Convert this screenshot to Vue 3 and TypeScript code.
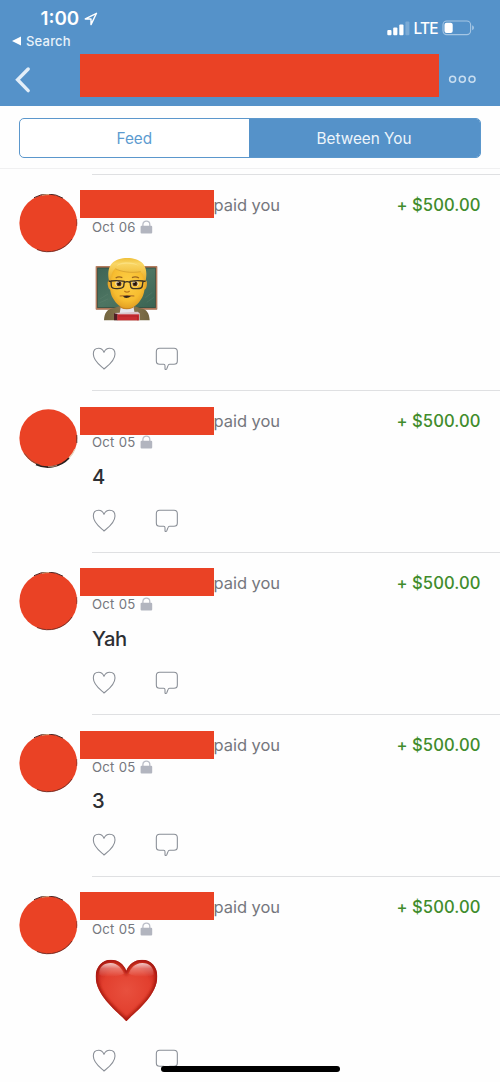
<script setup lang="ts">
interface Payment {
  id: number
  date: string
  note?: string
  emoji?: 'teacher' | 'heart'
  low?: boolean
  shade: 'light' | 'deep'
}

const payments: Payment[] = [
  { id: 1, date: 'Oct 06', emoji: 'teacher', shade: 'light' },
  { id: 2, date: 'Oct 05', note: '4', low: true, shade: 'deep' },
  { id: 3, date: 'Oct 05', note: 'Yah', shade: 'light' },
  { id: 4, date: 'Oct 05', note: '3', low: true, shade: 'light' },
  { id: 5, date: 'Oct 05', emoji: 'heart', shade: 'light' },
]
</script>

<template>
  <main class="screen">
    <header class="header">
      <div class="status">
        <div class="status-left">
          <div class="clock">
            <span class="time">1:00</span>
            <svg class="location" width="14" height="14" viewBox="0 0 14 14">
              <path d="M1.3 6.8 12.5 1.3 7 12.6V7H1.3Z" />
            </svg>
          </div>
          <div class="return">
            <svg width="9" height="10" viewBox="0 0 9 10"><path d="M0 5 9 .6V9.4Z" fill="#fff" /></svg>
            <span class="return-label">Search</span>
          </div>
        </div>
        <div class="status-right">
          <svg width="23" height="15" viewBox="0 0 23 15" fill="#fff">
            <rect x="0.3" y="9" width="4.2" height="5.2" rx="1" />
            <rect x="6.2" y="6.6" width="4.2" height="7.6" rx="1" />
            <rect x="12.3" y="3.4" width="4.2" height="10.8" rx="1" />
            <rect x="18.4" y="0.4" width="4" height="13.8" rx="1" opacity=".22" />
          </svg>
          <span class="lte">LTE</span>
          <svg class="battery" width="33" height="16" viewBox="0 0 33 16">
            <rect x="1" y="1" width="27.6" height="13.6" rx="3.8" fill="none" stroke="#a5c6e4" stroke-width="1.1" />
            <rect x="2.5" y="2.7" width="8.2" height="10.3" rx="2" fill="#fff" />
            <path d="M30.1 5.3Q32 6.2 32 7.8T30.1 10.3Z" fill="#a5c6e4" />
          </svg>
        </div>
      </div>
      <div class="nav">
        <svg class="back" width="18" height="29" viewBox="0 0 18 29">
          <path d="M15.2 4 4.6 14.8 15.2 25.6" fill="none" stroke="#e3eef8" stroke-width="3.4" stroke-linecap="round" />
        </svg>
        <div class="title-block"></div>
        <svg class="more" width="29" height="10" viewBox="0 0 29 10" fill="none" stroke="#c9def0" stroke-width="1.5">
          <circle cx="4.6" cy="5.2" r="3" /><circle cx="14.3" cy="5.2" r="3" /><circle cx="24" cy="5.2" r="3" />
        </svg>
      </div>
    </header>

    <div class="tabs-wrap">
      <div class="tabs">
        <div class="tab">Feed</div>
        <div class="tab active">Between You</div>
      </div>
    </div>

    <section class="list">
      <article v-for="p in payments" :key="p.id" class="row" :class="{ tall: p.emoji, low: p.low }">
        <svg class="avatar" width="60" height="60" viewBox="0 0 60 60">
          <circle cx="29.3" cy="29.1" r="28.9" fill="#ea4225" />
          <g v-if="p.shade === 'light'" fill="none">
            <path d="M15 3.7A28.8 28.8 0 0 1 44 4.2" stroke="#4c2421" stroke-width="1" />
            <path d="M23 1.3Q26 .5 30 .6" stroke="#cfaa83" stroke-width="1" />
            <path d="M57.7 25V32" stroke="#853329" stroke-width=".7" />
            <path d="M18 55.5A28.8 28.8 0 0 0 53 45" stroke="#5b2420" stroke-width=".8" />
          </g>
          <g v-else fill="none">
            <path d="M57.8 26V34" stroke="#5b2d26" stroke-width=".9" />
            <path d="M5.5 44.5A28.5 28.5 0 0 0 21 56" stroke="#80513c" stroke-width="1" />
            <path d="M17 55.5A29 29 0 0 0 50 49" stroke="#28201e" stroke-width="1.7" />
            <path d="M29 57.7Q35 57.6 38 56.4" stroke="#9f7965" stroke-width="1.3" />
            <path d="M50 49Q54 45 56 40" stroke="#e8d6bd" stroke-width="1.2" />
          </g>
        </svg>
        <div class="content">
          <div class="headline">
            <div class="name-block"></div>
            <span class="verb">paid you</span>
            <span class="amount">+ $500.00</span>
          </div>
          <div class="meta">
            <span class="date">{{ p.date }}</span>
            <svg width="13" height="14" viewBox="0 0 13 14">
              <path d="M2.9 7V4.5a3.45 3.45 0 0 1 6.9 0V7" fill="none" stroke="#bcbfc8" stroke-width="1.3" />
              <rect x=".6" y="5.7" width="11.6" height="7.9" rx="1.1" fill="#b2b5bf" />
            </svg>
          </div>
          <div class="message">
            <span v-if="p.note" class="note">{{ p.note }}</span>
            <svg v-else-if="p.emoji === 'teacher'" class="emoji" width="63" height="64" viewBox="30 21 189 192">
              <defs>
                <radialGradient id="skin" cx=".5" cy=".42" r=".6">
                  <stop offset="0" stop-color="#fdce45" /><stop offset=".7" stop-color="#f7bd30" /><stop offset="1" stop-color="#e19d22" />
                </radialGradient>
                <linearGradient id="hair" x1="0" y1="0" x2="0" y2="1">
                  <stop offset="0" stop-color="#efc03a" /><stop offset=".25" stop-color="#f9d666" /><stop offset=".6" stop-color="#f3c344" /><stop offset="1" stop-color="#e5ab2e" />
                </linearGradient>
                <linearGradient id="board" x1="0" y1="0" x2="1" y2="1">
                  <stop offset="0" stop-color="#3d6455" /><stop offset=".5" stop-color="#4d7562" /><stop offset="1" stop-color="#3a6352" />
                </linearGradient>
                <linearGradient id="coat"><stop offset="0" stop-color="#72643f" /><stop offset=".5" stop-color="#8c7b54" /><stop offset="1" stop-color="#72643f" /></linearGradient>
              </defs>
              <rect x="32" y="48" width="185" height="131" rx="2" fill="#a76f51" />
              <rect x="34" y="50" width="181" height="127" fill="none" stroke="#c08d70" stroke-width="1.5" />
              <rect x="38" y="54" width="173" height="119" fill="url(#board)" stroke="#294a3e" stroke-width="2" />
              <path d="M45 147 69 132M44 158 69 147M181 143 202 127M185 157 207 142" stroke="#779583" stroke-width="2" opacity=".3" />
              <path d="M57 211C58 190 66 177 84 175L107 167H145L167 175C185 177 193 190 194 211Z" fill="url(#coat)" />
              <path d="M108 168H145L149 190H104Z" fill="#e6e5ed" />
              <path d="M106 160H145V173Q125 182 106 173Z" fill="#c88421" />
              <path d="M76 91C68 88 67 98 69 108 70 116 74 120 79 119ZM178 91C186 88 187 98 185 108 184 116 180 120 175 119Z" fill="#e7a52a" />
              <path d="M74 75C75 50 99 41 127 41S179 50 180 75C181 108 179 130 171 143 160 163 146 174 127 174S94 163 83 143C75 130 73 108 74 75Z" fill="url(#skin)" />
              <path d="M72 92C68 74 69 53 81 40 91 29 109 24 127 24S162 29 173 40C185 53 186 74 182 92L177 90C177 80 174 71 167 66 137 70 107 66 90 56 81 64 78 76 77 90Z" fill="url(#hair)" />
              <path d="M95 48C104 35 142 32 162 48 145 40 111 38 95 48Z" fill="#ffed9d" opacity=".45" />
              <path d="M91 56C106 65 137 70 167 65" fill="none" stroke="#c58c22" stroke-width="1.6" />
              <path d="M92 84Q101 78 112 83M141 83Q151 78 162 84" fill="none" stroke="#9b651e" stroke-width="4" />
              <ellipse cx="101" cy="101" rx="10" ry="8" fill="#f6e9bc" /><ellipse cx="151" cy="101" rx="10" ry="8" fill="#f6e9bc" />
              <circle cx="102" cy="101" r="7.5" fill="#583215" /><circle cx="150" cy="101" r="7.5" fill="#583215" />
              <circle cx="102" cy="101" r="4" fill="#18130f" /><circle cx="150" cy="101" r="4" fill="#18130f" />
              <circle cx="99" cy="97" r="2" fill="#fff" /><circle cx="147" cy="97" r="2" fill="#fff" />
              <path d="M78 93Q96 90 118 94L116 109Q113 116 98 116 80 117 79 108ZM135 94Q156 90 174 93L172 108Q170 117 153 116 138 117 137 109ZM118 97Q126 93 135 97M78 95 71 93M174 95 182 93" fill="none" stroke="#3a3224" stroke-width="4" stroke-linejoin="round" />
              <path d="M118 123Q126 130 134 123" fill="none" stroke="#bd791a" stroke-width="4" />
              <path d="M104 138Q126 136 148 138" fill="none" stroke="#a56321" stroke-width="3" />
              <path d="M114 139Q126 136 138 139 131 144 124 144T114 139Z" fill="#33241a" />
              <path d="M89 189 158 185 164 190V211H92Z" fill="#d9c5cb" />
              <path d="M87 190 98 192V211H87Z" fill="#4e1d23" />
              <path d="M97 193H162V211H97Z" fill="#c82d32" /><path d="M101 198H158V211" fill="none" stroke="#a91f28" stroke-width="2" />
            </svg>
            <svg v-else class="emoji" width="63" height="63" viewBox="285 237 189 189">
              <defs>
                <radialGradient id="red" cx=".5" cy=".5" r=".62">
                  <stop offset="0" stop-color="#e8503e" /><stop offset=".62" stop-color="#e23f2e" /><stop offset=".87" stop-color="#ca281f" /><stop offset="1" stop-color="#98160f" />
                </radialGradient>
                <linearGradient id="gloss" x1="0" y1="0" x2="0" y2="1"><stop offset="0" stop-color="#fff" stop-opacity=".75" /><stop offset=".4" stop-color="#fff" stop-opacity=".3" /><stop offset="1" stop-color="#fff" stop-opacity="0" /></linearGradient>
                <clipPath id="heart-clip"><path d="M379 424C362 402 287 352 287 289 287 260 307 239 333 239 354 239 371 252 379 272 387 252 405 239 426 239 453 239 472 260 472 289 472 352 397 402 379 424Z" /></clipPath>
                <filter id="soft"><feGaussianBlur stdDeviation="4" /></filter>
                <filter id="blend"><feGaussianBlur stdDeviation="2" /></filter>
              </defs>
              <g clip-path="url(#heart-clip)">
                <rect x="285" y="237" width="189" height="189" fill="url(#red)" />
                <path d="M379 424C362 402 287 352 287 289 287 260 307 239 333 239 354 239 371 252 379 272 387 252 405 239 426 239 453 239 472 260 472 289 472 352 397 402 379 424Z" fill="none" stroke="#a51710" stroke-width="12" filter="url(#soft)" />
                <path d="M298 284C296 259 313 249 332 249 353 250 367 266 372 281 352 292 314 294 298 284ZM386 281C391 265 406 249 427 249 448 249 462 262 461 284 444 294 406 292 386 281Z" fill="url(#gloss)" filter="url(#blend)" />
              </g>
            </svg>
          </div>
          <div class="actions">
            <svg width="24" height="24" viewBox="21 290 72 72">
              <path d="M57 356C49 348 25 333 25 311 25 300 32 294 41 294 49 294 54 299 57 306 60 299 66 294 74 294 83 294 90 300 90 311 90 333 65 349 57 356Z" />
            </svg>
            <svg width="24" height="24" viewBox="210 290 72 72">
              <path d="M224 294H267Q277 294 277 304V332Q277 342 267 342H254Q250 342 249 346L245 356Q243 359 240 356V346Q240 342 236 342H224Q214 342 214 332V304Q214 294 224 294Z" />
            </svg>
          </div>
        </div>
      </article>
    </section>
    <div class="home-indicator"></div>
  </main>
</template>

<style>
body { margin: 0; background: #fefefe; }
</style>

<style scoped>
.screen {
  position: relative;
  width: 500px;
  height: 1082px;
  overflow: hidden;
  background: #fefefe;
  color: #75777d;
  font-family: Inter, "Liberation Sans", sans-serif;
  white-space: nowrap;
}
svg { display: block; flex: none; }
.header { height: 106px; background: #5592c9; color: #fff; }
.status { height: 53px; display: flex; justify-content: space-between; box-sizing: border-box; padding: 7px 25.5px 0 12px; }
.clock { height: 24px; display: flex; align-items: center; padding-left: 28.5px; }
.time { width: 43.5px; font-size: 18.8px; font-weight: 600; line-height: 24px; }
.location { fill: none; stroke: #fff; stroke-width: 1.4; stroke-linejoin: round; }
.return { height: 20px; display: flex; align-items: center; gap: 5px; }
.return-label { font-size: 13px; font-weight: 500; letter-spacing: .2px; color: #e9f2fa; }
.status-right { display: flex; align-items: center; height: 42px; }
.lte { width: 28px; margin-left: 4px; font-size: 15.4px; font-weight: 500; letter-spacing: -.8px; }
.battery { margin-top: -1px; }
.nav { display: flex; align-items: flex-start; }
.back { margin: 12px 49px 0 13px; }
.title-block { width: 359.3px; height: 43.5px; margin-top: .5px; background: #ea4225; }
.more { margin: 21px 0 0 9px; }
.tabs-wrap { height: 63px; box-sizing: border-box; padding: 12px 19.3px 0; border-bottom: 1px solid #f0f0f1; }
.tabs { display: flex; height: 40px; box-sizing: border-box; border: 1.4px solid #5b97cc; border-radius: 5px; overflow: hidden; background: #fff; }
.tab { width: 228px; padding-right: 1px; line-height: 40px; text-align: center; color: #5c9bd0; font-size: 15.3px; }
.active { flex: 1; background: #5592c9; color: #edf5fb; }
.list { padding-top: 5px; }
.row { display: flex; position: relative; height: 162px; }
.row.tall { height: 216px; }
.avatar { margin: 20px 1px 0 19px; }
.row:nth-child(2) .avatar { margin-top: 19px; }
.content { flex: 1; display: flex; flex-direction: column; padding-top: 16px; }
.content::before { content: ""; height: 1px; margin: -16px 0 15px 12px; background: #dfe0e2; flex: none; }
.headline { display: flex; height: 28px; align-items: flex-start; line-height: 31px; }
.low .headline, .row:nth-child(3) .headline { line-height: 30px; }
.name-block { width: 133.5px; height: 28px; background: #ea4225; }
.low .name-block { margin-top: 1px; }
.verb { font-size: 16.5px; letter-spacing: -.05px; }
.amount { margin-left: auto; padding-right: 19.5px; color: #418c2c; font-size: 16.6px; font-weight: 500; letter-spacing: .07px; }
.meta { display: flex; height: 17px; margin-bottom: 2px; padding-left: 12px; align-items: center; }
.row:nth-child(2) .meta, .row:nth-child(3) .meta { height: 15px; margin-bottom: 4px; }
.date { width: 48px; font-size: 13.2px; letter-spacing: .25px; }
.message { flex: 1; padding-left: 12px; }
.note { display: block; margin-top: 11px; line-height: 25px; color: #2d2f33; font-size: 20.2px; font-weight: 500; letter-spacing: -.4px; }
.emoji { margin: 20px 0 0 3px; }
.actions { display: flex; gap: 39px; height: 43px; padding-left: 12px; }
.actions svg { fill: none; stroke: #898e96; stroke-width: 3.2; stroke-linejoin: round; }
.home-indicator { position: absolute; left: 160.5px; top: 1066px; width: 179px; height: 6px; border-radius: 3px; background: #000; }
</style>
